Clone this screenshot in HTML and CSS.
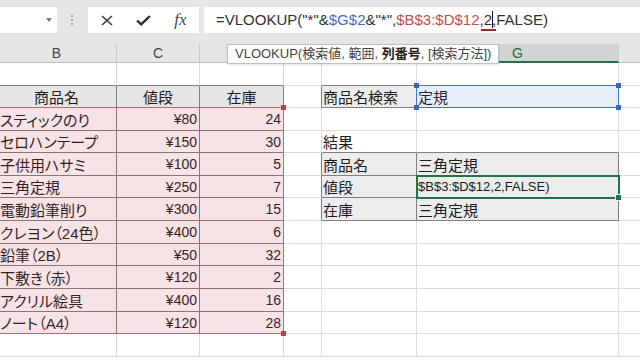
FILE: index.html
```html
<!DOCTYPE html>
<html>

<head>
    <meta charset="utf-8">
    <link rel="stylesheet" href="styles.css">
</head>

<body>
    <!-- Formula bar -->
    <div class="formula-bar">
        <div class="name-box"><span class="drop"></span></div>
        <div class="grip"><i></i><i></i><i></i></div>
        <div class="fx-buttons">
            <span class="btn">
                <svg width="12" height="11" viewBox="0 0 12 11"><path d="M1 1l10 9M11 1L1 10" stroke="#3c3c3c" stroke-width="1.6" fill="none"/></svg>
            </span>
            <span class="btn">
                <svg width="15" height="11" viewBox="0 0 15 11"><path d="M1.2 5.6l4 3.8 8.6-8.2" stroke="#2e2e2e" stroke-width="2.3" fill="none"/></svg>
            </span>
            <span class="btn fx">fx</span>
        </div>
        <div class="formula-input">=VLOOKUP("*"&amp;<span class="ref-b">$G$2</span>&amp;"*",<span class="ref-r">$B$3:$D$12</span>,<span class="arg">2</span><span class="caret"></span>,FALSE)</div>
    </div>

    <!-- Sheet -->
    <div class="sheet">
        <table class="grid">
            <thead>
                <tr>
                    <!-- D, E and F sit under the tooltip; H is past the window edge -->
                    <th class="c-b">B</th>
                    <th class="c-c">C</th>
                    <th class="c-d"></th>
                    <th class="c-e"></th>
                    <th class="c-f"></th>
                    <th class="c-g sel">G</th>
                    <th class="c-h"></th>
                </tr>
            </thead>
            <tbody>
                <tr>
                    <td class="top"></td><td class="top"></td><td class="top"></td><td></td><td class="top"></td><td class="top"></td><td></td>
                </tr>
                <tr class="s">
                    <td class="box hd">商品名</td>
                    <td class="box hd">値段</td>
                    <td class="box hd">在庫</td>
                    <td class="lft"></td>
                    <td class="box lbl">商品名検索</td>
                    <td class="box anchor">定規
                        <div class="hl hl-blue"><i class="tl"></i><i class="tr"></i><i class="bl"></i><i class="br"></i></div>
                    </td>
                    <td></td>
                </tr>
                <tr>
                    <td class="box name anchor">スティックのり
                        <div class="hl hl-red"><i class="tr"></i><i class="br"></i></div>
                    </td>
                    <td class="box num">¥80</td>
                    <td class="box num">24</td>
                    <td></td><td></td><td></td><td></td>
                </tr>
                <tr class="s">
                    <td class="box name">セロハンテープ</td>
                    <td class="box num">¥150</td>
                    <td class="box num">30</td>
                    <td></td>
                    <td class="top">結果</td>
                    <td class="top"></td>
                    <td></td>
                </tr>
                <tr>
                    <td class="box name">子供用ハサミ</td>
                    <td class="box num">¥100</td>
                    <td class="box num">5</td>
                    <td class="lft"></td>
                    <td class="box lbl">商品名</td>
                    <td class="box lbl">三角定規</td>
                    <td></td>
                </tr>
                <tr class="s">
                    <td class="box name">三角定規</td>
                    <td class="box num">¥250</td>
                    <td class="box num">7</td>
                    <td class="lft"></td>
                    <td class="box lbl">値段</td>
                    <td class="box lbl anchor editing">$B$3:$D$12,2,FALSE)
                        <div class="hl hl-active"></div>
                    </td>
                    <td></td>
                </tr>
                <tr>
                    <td class="box name">電動鉛筆削り</td>
                    <td class="box num">¥300</td>
                    <td class="box num">15</td>
                    <td class="lft"></td>
                    <td class="box lbl">在庫</td>
                    <td class="box lbl">三角定規</td>
                    <td></td>
                </tr>
                <tr>
                    <td class="box name">クレヨン（24色）</td>
                    <td class="box num">¥400</td>
                    <td class="box num">6</td>
                    <td></td><td></td><td></td><td></td>
                </tr>
                <tr class="s">
                    <td class="box name">鉛筆（2B）</td>
                    <td class="box num">¥50</td>
                    <td class="box num">32</td>
                    <td></td><td></td><td></td><td></td>
                </tr>
                <tr>
                    <td class="box name">下敷き（赤）</td>
                    <td class="box num">¥120</td>
                    <td class="box num">2</td>
                    <td></td><td></td><td></td><td></td>
                </tr>
                <tr>
                    <td class="box name">アクリル絵具</td>
                    <td class="box num">¥400</td>
                    <td class="box num">16</td>
                    <td></td><td></td><td></td><td></td>
                </tr>
                <tr class="s">
                    <td class="box name">ノート（A4）</td>
                    <td class="box num">¥120</td>
                    <td class="box num">28</td>
                    <td></td><td></td><td></td><td></td>
                </tr>
                <tr>
                    <td></td><td></td><td></td><td></td><td></td><td></td><td></td>
                </tr>
            </tbody>
        </table>

        <!-- Function argument tooltip -->
        <div class="tip">VLOOKUP(検索値, 範囲, <b>列番号</b>, [検索方法])</div>
    </div>
</body>

</html>
```

FILE: styles.css
```css
* {
    box-sizing: border-box;
}

body {
    margin: 0;
    width: 640px;
    height: 360px;
    overflow: hidden;
    background: #fff;
    font-family: "Liberation Sans", "Noto Sans CJK JP", sans-serif;
    color: #1b1b1b;
}

/* Formula bar */
.formula-bar {
    display: flex;
    align-items: flex-start;
    height: 44px;
    padding-top: 7px;
    background: #e6e6e6;
}

.name-box {
    display: flex;
    align-items: center;
    justify-content: flex-end;
    width: 57px;
    height: 26px;
    padding-right: 5px;
    background: #fff;
}

.drop {
    width: 0;
    height: 0;
    border-left: 3.5px solid transparent;
    border-right: 3.5px solid transparent;
    border-top: 4px solid #7a7a7a;
}

.grip {
    display: flex;
    flex-direction: column;
    gap: 2px;
    margin: 8px 0 0 14px;
}

.grip i {
    width: 2px;
    height: 2px;
    background: #a8a8a8;
}

.fx-buttons {
    display: flex;
    width: 111px;
    height: 26px;
    margin-left: 15px;
    background: #fff;
}

.btn {
    display: flex;
    align-items: center;
    justify-content: center;
    width: 37px;
}

.fx {
    font-family: "Liberation Serif", serif;
    font-style: italic;
    font-size: 17px;
    color: #4a4a4a;
}

.formula-input {
    flex: 1;
    height: 26px;
    margin-left: 5px;
    padding-left: 12px;
    background: #fff;
    font-size: 15px;
    line-height: 26px;
    color: #303030;
    white-space: nowrap;
}

.ref-b {
    color: #3f6dc4;
}

.ref-r {
    color: #c0504d;
}

.arg {
    position: relative;
}

.arg::after {
    content: "";
    position: absolute;
    left: -3px;
    right: -4px;
    bottom: -3px;
    height: 2px;
    background: #a4262c;
}

.caret {
    display: inline-block;
    width: 1px;
    height: 17px;
    margin-right: -1px;
    background: #111;
    vertical-align: -3px;
}

/* Sheet */
.sheet {
    position: relative;
    margin-left: -3px;
}

.grid {
    width: 722px;
    border-collapse: separate;
    border-spacing: 0;
    table-layout: fixed;
}

.c-b { width: 120px; }
.c-c { width: 83px; }
.c-d { width: 84px; }
.c-e { width: 38px; }
.c-f { width: 95px; }
.c-g { width: 202px; }
.c-h { width: 100px; }

.grid thead tr {
    height: 19px;
}

.grid th {
    padding: 0;
    font-size: 14px;
    font-weight: normal;
    color: #444;
    background: #e6e6e6;
    border-right: 1px solid #cbcbcb;
    border-bottom: 1px solid #bdbdbd;
}

.grid th.sel {
    background: #d3d3d3;
    color: #1e6b41;
    border-bottom: 2px solid #217346;
}

.grid tbody tr {
    height: 23px;
}

.grid tbody tr.s {
    height: 22px;
}

.grid td {
    padding: 0 1px;
    font-size: 15px;
    white-space: nowrap;
    border-right: 1px solid #dcdcdc;
    border-bottom: 1px solid #dcdcdc;
    font-feature-settings: "palt";
}

.grid td.name {
    padding-left: 3px;
}

.grid td.box {
    border-right-color: #7f7f7f;
    border-bottom-color: #7f7f7f;
}

.grid td.top {
    border-bottom-color: #7f7f7f;
}

.grid td.lft {
    border-right-color: #7f7f7f;
}

.hd {
    text-align: center;
    background: #e7e6e6;
}

.lbl {
    background: #ececec;
}

.grid td.num {
    padding-right: 2px;
    text-align: right;
    font-size: 14px;
}

.grid td.editing {
    font-size: 13px;
}

/* Reference highlights */
.anchor {
    position: relative;
}

.hl {
    position: absolute;
    pointer-events: none;
}

.hl i {
    position: absolute;
    width: 5px;
    height: 5px;
}

.hl .tl { left: -3px; top: -3px; }
.hl .tr { right: -3px; top: -3px; }
.hl .bl { left: -3px; bottom: -3px; }
.hl .br { right: -3px; bottom: -3px; }

.hl-red {
    left: 0;
    top: -1px;
    width: 287px;
    height: 227px;
    border: 1px solid #c8636c;
    background: rgba(190, 60, 70, 0.14);
}

.hl-red i {
    background: #b8434c;
}

.hl-blue {
    left: -1px;
    top: -1px;
    width: 203px;
    height: 23px;
    border: 1px solid #4472c4;
    background: rgba(68, 114, 196, 0.12);
}

.hl-blue i {
    background: #3f66b5;
}

.hl-active {
    left: -1px;
    top: -1px;
    width: 204px;
    height: 24px;
    border: 2px solid #217346;
}

.hl-active::after {
    content: "";
    position: absolute;
    right: -4px;
    bottom: -4px;
    width: 5px;
    height: 5px;
    background: #217346;
    border: 1px solid #fff;
}

/* Function tooltip */
.tip {
    position: absolute;
    top: 0;
    left: 230px;
    height: 20px;
    padding: 0 7px;
    background: #fff;
    border: 1px solid #bfbfbf;
    box-shadow: 0 1px 2px rgba(0, 0, 0, 0.12);
    font-size: 13px;
    line-height: 18px;
    color: #444;
    white-space: nowrap;
}

.tip b {
    color: #222;
}
```
